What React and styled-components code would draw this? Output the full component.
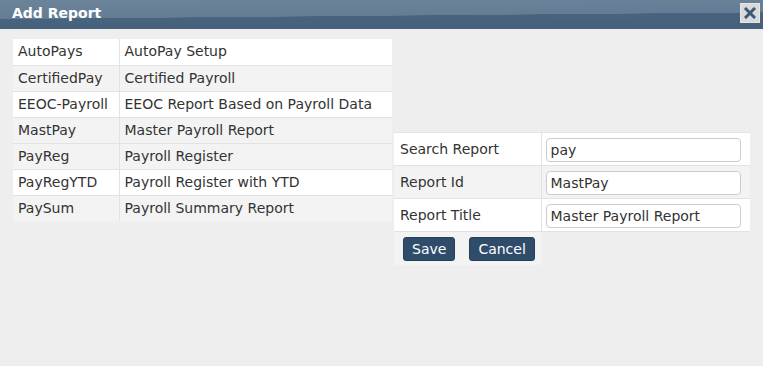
import React from "react";
import styled, { createGlobalStyle } from "styled-components";

const Global = createGlobalStyle`
  html, body { margin: 0; padding: 0; background: #eeeeee; }
  body { font-family: "DejaVu Sans", Verdana, sans-serif; }
  * { box-sizing: border-box; }
`;

const Dialog = styled.div`
  width: 763px;
  height: 366px;
  background: #eeeeee;
  display: flex;
  flex-direction: column;
`;

const TitleBar = styled.div`
  height: 29px;
  display: flex;
  align-items: center;
  justify-content: space-between;
  padding: 0 3px 0 12px;
  background: linear-gradient(179.5deg, #6b849a 0%, #647d94 53%, #48637d 54%, #45607a 100%);
`;

const Title = styled.span`
  color: #ffffff;
  font-weight: bold;
  font-size: 14px;
  line-height: 17px;
  margin-top: -3px;
`;

const CloseButton = styled.button`
  width: 20px;
  height: 20px;
  margin-top: -4px;
  padding: 0;
  border: 1px solid #e6e6e6;
  background: #d9d9d9;
  display: flex;
  align-items: center;
  justify-content: center;
  cursor: pointer;
`;

const Body = styled.div`
  display: flex;
  align-items: flex-start;
  gap: 2px;
  padding: 10px 0 10px 13px;
`;

const Table = styled.table`
  border-collapse: collapse;
  font-size: 14px;
  color: #333333;
  flex-shrink: 0;
`;

const ListTable = styled(Table)`
  width: 379px;
`;

const ListRow = styled.tr`
  background: ${(p) => (p.$shade ? "#f3f3f3" : "#ffffff")};
  border-bottom: 1px solid #e2e2e2;
  &:last-child { border-bottom: none; }
`;

const ListCell = styled.td`
  height: 26px;
  padding: 0 5px;
  line-height: 17px;
  white-space: nowrap;
  vertical-align: middle;
  & + & { border-left: 1px solid #e2e2e2; }
`;

const IdCell = styled(ListCell)`
  width: 106px;
`;

const FormTable = styled(Table)`
  table-layout: fixed;
  width: 356px;
  margin-top: 93px;
  border-top: 1px solid #e4e4e4;
`;

const FormRow = styled.tr`
  background: ${(p) => (p.$shade ? "#f3f3f3" : "#ffffff")};
  border-bottom: 1px solid #e2e2e2;
`;

const LabelCell = styled.td`
  width: 147px;
  height: 33px;
  padding: 0 6px;
  vertical-align: middle;
  white-space: nowrap;
  border-right: 1px solid #e2e2e2;
`;

const FieldCell = styled.td`
  height: 33px;
  padding: 0 9px 0 4px;
  vertical-align: middle;
`;

const Input = styled.input`
  display: block;
  width: 195px;
  height: 24px;
  margin-top: 1px;
  border: 1px solid #cccccc;
  border-radius: 4px;
  background: #ffffff;
  padding: 0 4px;
  font-family: "DejaVu Sans", Verdana, sans-serif;
  font-size: 14px;
  color: #333333;
  outline: none;
`;

const ButtonRow = styled.tr``;

const ButtonCell = styled.td`
  background: #f3f3f3;
  height: 33px;
  padding: 5px 9px 4px;
  vertical-align: top;
`;

const Buttons = styled.div`
  display: flex;
  gap: 14px;
`;

const Button = styled.button`
  height: 24px;
  padding: 0 8px;
  background: #2f4d6b;
  border: 1px solid #26405a;
  border-radius: 3px;
  color: #ffffff;
  font-family: "DejaVu Sans", Verdana, sans-serif;
  font-size: 14px;
  line-height: 20px;
  cursor: pointer;
`;

const reports = [
  ["AutoPays", "AutoPay Setup", false],
  ["CertifiedPay", "Certified Payroll", true],
  ["EEOC-Payroll", "EEOC Report Based on Payroll Data", false],
  ["MastPay", "Master Payroll Report", true],
  ["PayReg", "Payroll Register", true],
  ["PayRegYTD", "Payroll Register with YTD", false],
  ["PaySum", "Payroll Summary Report", true],
];

const CloseIcon = () => (
  <svg width="12" height="12" viewBox="0 0 12 12">
    <path d="M2 2 L10 10 M10 2 L2 10" stroke="#39587a" strokeWidth="3" strokeLinecap="square" />
  </svg>
);

export default function App() {
  return (
    <Dialog>
      <Global />
      <TitleBar>
        <Title>Add Report</Title>
        <CloseButton aria-label="Close">
          <CloseIcon />
        </CloseButton>
      </TitleBar>
      <Body>
        <ListTable>
          <tbody>
            {reports.map(([id, title, shade]) => (
              <ListRow key={id} $shade={shade}>
                <IdCell>{id}</IdCell>
                <ListCell>{title}</ListCell>
              </ListRow>
            ))}
          </tbody>
        </ListTable>
        <FormTable>
          <tbody>
            <FormRow>
              <LabelCell>Search Report</LabelCell>
              <FieldCell>
                <Input defaultValue="pay" />
              </FieldCell>
            </FormRow>
            <FormRow $shade>
              <LabelCell>Report Id</LabelCell>
              <FieldCell>
                <Input defaultValue="MastPay" />
              </FieldCell>
            </FormRow>
            <FormRow>
              <LabelCell>Report Title</LabelCell>
              <FieldCell>
                <Input defaultValue="Master Payroll Report" />
              </FieldCell>
            </FormRow>
            <ButtonRow>
              <ButtonCell>
                <Buttons>
                  <Button>Save</Button>
                  <Button>Cancel</Button>
                </Buttons>
              </ButtonCell>
            </ButtonRow>
          </tbody>
        </FormTable>
      </Body>
    </Dialog>
  );
}
